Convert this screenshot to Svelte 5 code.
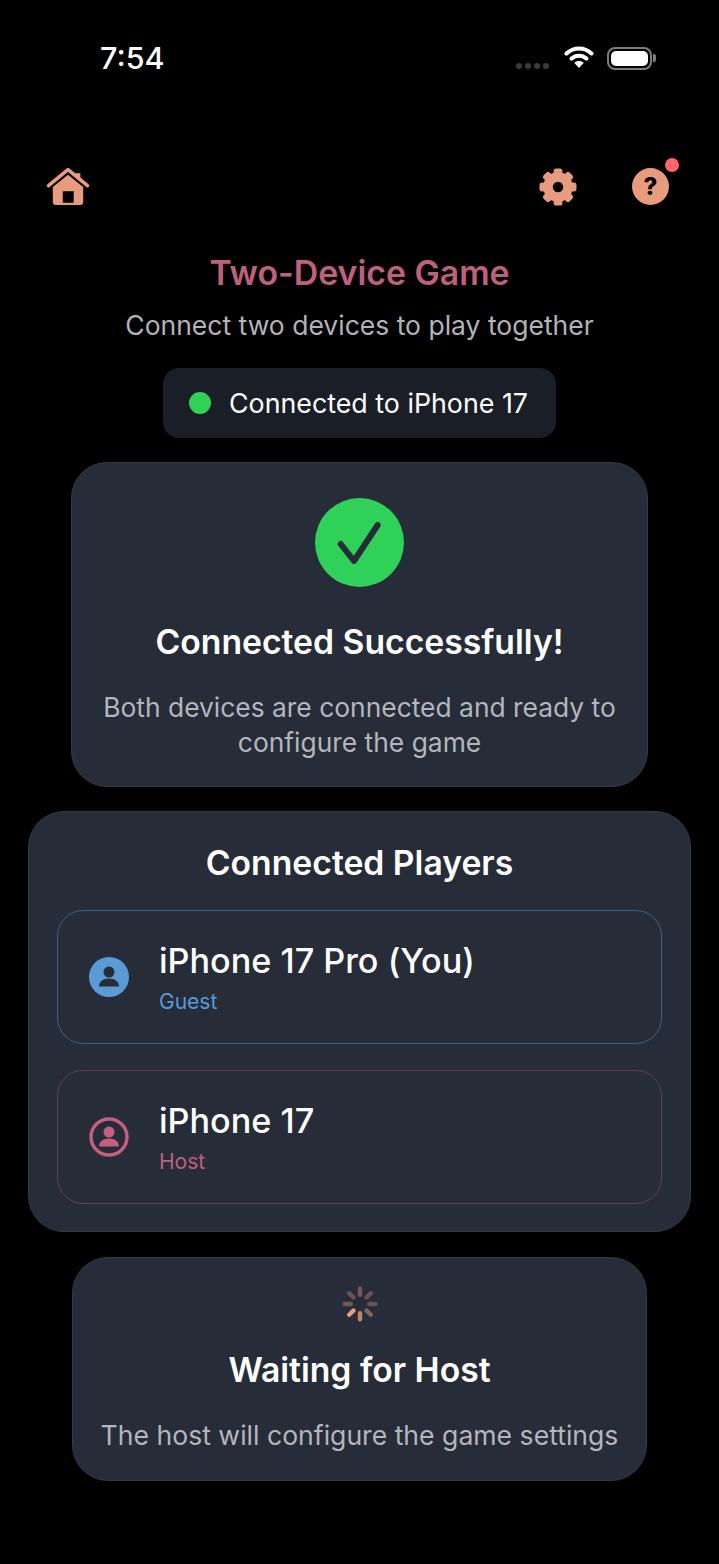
<script>
  const teeth = [0, 45, 90, 135, 180, 225, 270, 315];
  const spokes = [
    { a: 0, o: 0.4 },
    { a: 45, o: 0.35 },
    { a: 90, o: 0.35 },
    { a: 135, o: 0.5 },
    { a: 180, o: 0.8 },
    { a: 225, o: 1 },
    { a: 270, o: 0.4 },
    { a: 315, o: 0.35 }
  ];
</script>

<div class="page">
  <div class="statusbar">
    <span class="time">7:54</span>
    <div class="status-icons">
      <div class="signal"><i></i><i></i><i></i><i></i></div>
      <svg class="wifi" width="30" height="24" viewBox="0 0 30 24">
        <path d="M2.500 8.500C9.500 1.800 20.500 1.800 27.500 8.500" fill="none" stroke="#fff" stroke-width="4" stroke-linecap="round" />
        <path d="M7.600 13.600C11.800 9.800 18.200 9.800 22.400 13.600" fill="none" stroke="#fff" stroke-width="4" stroke-linecap="round" />
        <path d="M15 23 10.200 17.800C13 15.400 17 15.400 19.800 17.800Z" fill="#fff" />
      </svg>
      <div class="battery"><div class="level"></div></div>
      <div class="nub"></div>
    </div>
  </div>

  <div class="nav">
    <svg class="home" width="46" height="38" viewBox="0 0 46 40">
      <path d="M30.500 6.500h5.500v9l-5.500-4.600z" fill="#e89b7d" />
      <path d="M2.500 19.500 23 2.800l20.500 16.700" fill="none" stroke="#e89b7d" stroke-width="3.800" stroke-linecap="round" stroke-linejoin="round" />
      <path fill-rule="evenodd" d="M23 8.200 39 21v16.400a2.600 2.600 0 0 1-2.600 2.600H9.600A2.600 2.600 0 0 1 7 37.400V21zM17.500 25.500v12h11.500v-12z" fill="#e89b7d" />
    </svg>
    <div class="nav-right">
      <svg class="gear" width="38" height="38" viewBox="0 0 38 38">
        {#each teeth as t}
          <rect x="14.600" y="0.500" width="8.800" height="9" rx="2.600" fill="#e89b7d" transform="rotate({t} 19 19)" />
        {/each}
        <circle cx="19" cy="19" r="10" fill="none" stroke="#e89b7d" stroke-width="9.500" />
      </svg>
      <div class="help">
        <span class="q">?</span>
        <span class="badge"></span>
      </div>
    </div>
  </div>

  <h1>Two-Device Game</h1>
  <p class="subtitle">Connect two devices to play together</p>

  <div class="pill">
    <span class="dot"></span>
    <span>Connected to iPhone 17</span>
  </div>

  <section class="card success">
    <div class="check">
      <svg width="89" height="89" viewBox="0 0 89 89">
        <path d="M25.700 46 39 63 62.700 27" fill="none" stroke="#262c38" stroke-width="6" stroke-linecap="round" stroke-linejoin="round" />
      </svg>
    </div>
    <h2>Connected Successfully!</h2>
    <p>Both devices are connected and ready to configure the game</p>
  </section>

  <section class="card players">
    <h2>Connected Players</h2>
    <div class="player guest">
      <svg width="40" height="40" viewBox="0 0 40 40">
        <circle cx="20" cy="20" r="20" fill="#5b9bd5" />
        <circle cx="20" cy="15" r="5.500" fill="#262c38" />
        <path d="M10 29.500c0-5 4-8 10-8s10 3 10 8z" fill="#262c38" />
      </svg>
      <div class="who">
        <div class="name">iPhone 17 Pro (You)</div>
        <div class="role">Guest</div>
      </div>
    </div>
    <div class="player host">
      <svg width="40" height="40" viewBox="0 0 40 40">
        <circle cx="20" cy="20" r="18" fill="none" stroke="#c4607f" stroke-width="3.400" />
        <circle cx="20" cy="15" r="5.500" fill="#c4607f" />
        <path d="M10 29.500c0-5 4-8 10-8s10 3 10 8z" fill="#c4607f" />
      </svg>
      <div class="who">
        <div class="name">iPhone 17</div>
        <div class="role">Host</div>
      </div>
    </div>
  </section>

  <section class="card waiting">
    <svg class="spinner" width="36" height="36" viewBox="0 0 36 36">
      {#each spokes as s}
        <rect x="15.800" y="0.500" width="4.400" height="10.500" rx="2.200" fill="#e89b7d" opacity={s.o} transform="rotate({s.a} 18 18)" />
      {/each}
    </svg>
    <h2>Waiting for Host</h2>
    <p>The host will configure the game settings</p>
  </section>
</div>

<style>
  :global(body) {
    background: #000;
  }

  .page {
    width: 719px;
    height: 1564px;
    display: flex;
    flex-direction: column;
    align-items: center;
    background: #000;
    color: #fff;
    font-family: Inter, "Liberation Sans", sans-serif;
    overflow: hidden;
  }

  .statusbar {
    width: 100%;
    height: 80px;
    box-sizing: border-box;
    padding: 38px 63px 0 100px;
    display: flex;
    justify-content: space-between;
    align-items: flex-start;
  }

  .time {
    font-size: 30.500px;
    font-weight: 500;
    line-height: 40px;
  }

  .status-icons {
    display: flex;
    align-items: center;
    height: 40px;
  }

  .signal {
    display: flex;
    gap: 3px;
    margin: 16px 15px 0 0;
  }

  .signal i {
    width: 6px;
    height: 6px;
    border-radius: 50%;
    background: #3c3c3e;
  }

  .wifi {
    margin-right: 13px;
    margin-top: -2px;
  }

  .battery {
    width: 45px;
    height: 23px;
    box-sizing: border-box;
    border: 2px solid #7c7c7c;
    border-radius: 8px;
    padding: 2px;
  }

  .level {
    height: 100%;
    background: #fff;
    border-radius: 5px;
  }

  .nub {
    width: 3px;
    height: 8px;
    margin-left: 1px;
    background: #7c7c7c;
    border-radius: 0 2px 2px 0;
  }

  .nav {
    width: 100%;
    height: 72px;
    box-sizing: border-box;
    margin-top: 70px;
    padding: 0 50px 0 45px;
    display: flex;
    justify-content: space-between;
    align-items: flex-start;
  }

  .home {
    margin-top: 17px;
  }

  .nav-right {
    display: flex;
    gap: 55px;
    margin-top: 18px;
  }

  .help {
    position: relative;
    width: 37px;
    height: 37px;
    border-radius: 50%;
    background: #e89b7d;
    color: #000;
    display: flex;
    align-items: center;
    justify-content: center;
  }

  .q {
    font-size: 24px;
    font-weight: 800;
    line-height: 1;
  }

  .badge {
    position: absolute;
    top: -10px;
    right: -10px;
    width: 14px;
    height: 14px;
    border-radius: 50%;
    background: #ff6568;
  }

  h1 {
    margin: 29px 0 0;
    font-size: 33.800px;
    line-height: 44px;
    font-weight: 600;
    color: #c0607f;
  }

  .subtitle {
    margin: 15px 0 0;
    font-size: 26.500px;
    line-height: 30px;
    color: #b3b3b8;
  }

  .pill {
    margin-top: 28px;
    height: 70px;
    width: 393px;
    box-sizing: border-box;
    padding: 0 26px;
    display: flex;
    align-items: center;
    gap: 18px;
    background: #1a1e27;
    border-radius: 16px;
    font-size: 26.800px;
  }

  .dot {
    width: 22px;
    height: 22px;
    border-radius: 50%;
    background: #30d158;
  }

  .card {
    box-sizing: border-box;
    display: flex;
    flex-direction: column;
    align-items: center;
    background: #262c38;
    border: 1.500px solid #343a46;
    text-align: center;
  }

  .card h2 {
    margin: 0;
    font-weight: 600;
    color: #fff;
  }

  .card p {
    margin: 0;
    font-size: 26.400px;
    line-height: 35px;
    color: #b4b6bd;
  }

  .success {
    width: 577px;
    height: 325px;
    margin-top: 24px;
    padding-top: 35px;
    border-radius: 36px;
  }

  .check {
    width: 89px;
    height: 89px;
    border-radius: 50%;
    background: #30d158;
  }

  .check svg {
    display: block;
  }

  .success h2 {
    margin-top: 31px;
    font-size: 33.700px;
    line-height: 48px;
  }

  .success p {
    margin-top: 24px;
    width: 530px;
  }

  .players {
    width: 663px;
    height: 421px;
    margin-top: 24px;
    padding: 29px 28px 0;
    border-radius: 36px;
    gap: 25px;
  }

  .players h2 {
    font-size: 33.700px;
    line-height: 44px;
  }

  .player {
    width: 100%;
    height: 134px;
    flex: none;
    box-sizing: border-box;
    padding: 0 31px;
    display: flex;
    align-items: center;
    gap: 30px;
    border-radius: 26px;
    border: 1.500px solid;
    text-align: left;
  }

  .player + .player {
    margin-top: 1px;
  }

  .guest {
    border-color: #3f5f82;
  }

  .host {
    border-color: #5c4059;
  }

  .name {
    font-size: 34.200px;
    line-height: 44px;
    font-weight: 550;
  }

  .role {
    margin-top: 5px;
    font-size: 21px;
    line-height: 28px;
  }

  .guest .role {
    color: #5b9bd5;
  }

  .host .role {
    color: #c0607f;
  }

  .waiting {
    width: 575px;
    height: 224px;
    margin-top: 25px;
    padding-top: 28px;
    border-radius: 36px;
  }

  .waiting h2 {
    margin-top: 26px;
    font-size: 33.700px;
    line-height: 44px;
  }

  .waiting p {
    margin-top: 26px;
    font-size: 26.600px;
  }
</style>
